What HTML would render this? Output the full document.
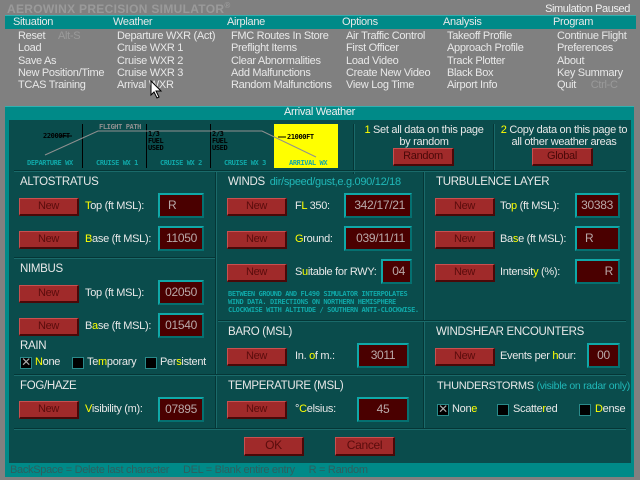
<!DOCTYPE html>
<html><head><meta charset="utf-8"><style>
*{margin:0;padding:0;box-sizing:border-box}
body{width:640px;height:480px;background:#808080;position:relative;overflow:hidden;font-family:"Liberation Sans",sans-serif;font-size:11px;color:#e8e8e8;letter-spacing:-0.3px}
.a{position:absolute;white-space:nowrap}
.y{color:#ffff00}
.c{color:#20b8b8}
.btn{position:absolute;width:60px;height:18px;background:#a02a2a;border-top:1px solid #c85050;border-left:1px solid #c85050;border-right:2px solid #4a0808;border-bottom:2px solid #4a0808;color:#5a0c0c;text-align:center;line-height:15px;font-size:11px}
.in{position:absolute;height:25px;background:#4a0000;border:2px solid #10a8a8;border-right-color:#057070;border-bottom-color:#057070;color:#b8a8a8;line-height:21px;font-size:12px;padding-right:5px;text-align:right}
.hl{position:absolute;height:2px;background:#053636;border-bottom:1px solid #1a6a6a}
.vl{position:absolute;width:2px;background:#053636;border-right:1px solid #1a6a6a}
.h{position:absolute;font-size:11.5px;color:#e8e8e8;white-space:nowrap}
.l{position:absolute;white-space:nowrap;font-size:11px}
.cb{position:absolute;width:12px;height:12px;background:#000;border:1px solid #2a8a8a}
.dl{position:absolute;font-family:"DejaVu Sans Mono",monospace;font-size:7px;font-weight:bold;color:#10a8a8;letter-spacing:-0.4px}
</style></head><body>
<div class="a" style="left:7px;top:1px;font-size:12px;font-weight:bold;color:#9a9a9a;letter-spacing:0.3px">AEROWINX PRECISION SIMULATOR<sup style="font-size:8px">®</sup></div>
<div class="a" style="right:10px;top:3px;font-size:11px;color:#f0f0f0;letter-spacing:-0.4px">Simulation Paused</div>
<div class="a" style="left:5px;top:15px;width:631px;height:14px;background:#008a88;border-top:1px solid #30b0b0"></div>
<div class="a" style="left:13px;top:16px">Situation</div>
<div class="a" style="left:113px;top:16px">Weather</div>
<div class="a" style="left:227px;top:16px">Airplane</div>
<div class="a" style="left:342px;top:16px">Options</div>
<div class="a" style="left:443px;top:16px">Analysis</div>
<div class="a" style="left:553px;top:16px">Program</div>
<div class="a" style="left:18px;top:30px;line-height:12.3px">Reset <span style="color:#9a9a9a;margin-left:10px">Alt-S</span><br>Load<br>Save As<br>New Position/Time<br>TCAS Training</div>
<div class="a" style="left:117px;top:30px;line-height:12.3px">Departure WXR (Act)<br>Cruise WXR 1<br>Cruise WXR 2<br>Cruise WXR 3<br>Arrival WXR</div>
<div class="a" style="left:231px;top:30px;line-height:12.3px">FMC Routes In Store<br>Preflight Items<br>Clear Abnormalities<br>Add Malfunctions<br>Random Malfunctions</div>
<div class="a" style="left:346px;top:30px;line-height:12.3px">Air Traffic Control<br>First Officer<br>Load Video<br>Create New Video<br>View Log Time</div>
<div class="a" style="left:447px;top:30px;line-height:12.3px">Takeoff Profile<br>Approach Profile<br>Track Plotter<br>Black Box<br>Airport Info</div>
<div class="a" style="left:557px;top:30px;line-height:12.3px">Continue Flight<br>Preferences<br>About<br>Key Summary<br>Quit <span style="color:#9a9a9a;margin-left:12px">Ctrl-C</span></div>
<svg class="a" style="left:150px;top:80px" width="14" height="20"><path d="M1 1 L1 15 L4 12 L7 18 L9 17 L6 11 L11 11 Z" fill="#fff" stroke="#000"/></svg>

<div class="a" style="left:5px;top:106px;width:629px;height:371px;background:#008a88;border-top:1px solid #30b0b0"></div>
<div class="a" style="left:5px;top:106px;width:629px;text-align:center;font-size:11px;color:#f0f0f0;line-height:13px">Arrival Weather</div>
<div class="a" style="left:9px;top:120px;width:622px;height:343px;background:#0a4c4c"></div>
<div class="a" style="left:10px;top:464px;font-size:11px;color:#2e5e5e">BackSpace = Delete last character &nbsp; &nbsp; DEL = Blank entire entry &nbsp; &nbsp; R = Random</div>

<div class="a" style="left:274px;top:124px;width:64px;height:44px;background:#ffff00"></div>
<div class="a" style="left:82px;top:124px;width:1px;height:44px;background:#000"></div>
<div class="a" style="left:146px;top:124px;width:1px;height:44px;background:#000"></div>
<div class="a" style="left:210px;top:124px;width:1px;height:44px;background:#000"></div>
<svg class="a" style="left:0;top:0" width="640" height="200"><polyline points="45,155 98,131 262,131 316,157" fill="none" stroke="#909090" stroke-width="1"/><line x1="60" y1="136" x2="72" y2="136" stroke="#000"/><line x1="278" y1="137" x2="286" y2="137" stroke="#000"/></svg>
<div class="dl" style="left:99px;top:123px;color:#909090">FLIGHT PATH</div>
<div class="dl" style="left:43px;top:132px;color:#000">22000FT</div>
<div class="dl" style="left:287px;top:133px;color:#000">21000FT</div>
<div class="dl" style="left:148px;top:131px;color:#000;line-height:7px">1/3<br>FUEL<br>USED</div>
<div class="dl" style="left:212px;top:131px;color:#000;line-height:7px">2/3<br>FUEL<br>USED</div>
<div class="dl" style="left:27px;top:159px">DEPARTURE WX</div>
<div class="dl" style="left:96px;top:159px">CRUISE WX 1</div>
<div class="dl" style="left:160px;top:159px">CRUISE WX 2</div>
<div class="dl" style="left:224px;top:159px">CRUISE WX 3</div>
<div class="dl" style="left:289px;top:159px">ARRIVAL WX</div>
<div class="vl" style="left:353px;top:124px;height:50px"></div>
<div class="vl" style="left:493px;top:124px;height:50px"></div>
<div class="a" style="left:358px;top:124px;width:132px;text-align:center;line-height:12px"><span class="y">1</span> Set all data on this page<br>by random</div>
<div class="a" style="left:496px;top:124px;width:136px;text-align:center;line-height:12px"><span class="y">2</span> Copy data on this page to<br>all other weather areas</div>
<div class="btn" style="left:393px;top:148px;width:61px;color:#4a0808">Random</div>
<div class="btn" style="left:532px;top:148px;width:61px;color:#4a0808">Global</div>

<div class="hl" style="left:14px;top:170px;width:612px"></div>
<div class="vl" style="left:215px;top:172px;height:256px"></div>
<div class="vl" style="left:423px;top:172px;height:256px"></div>
<div class="hl" style="left:14px;top:257px;width:201px"></div>
<div class="hl" style="left:218px;top:320px;width:408px"></div>
<div class="hl" style="left:14px;top:374px;width:612px"></div>
<div class="hl" style="left:14px;top:428px;width:612px"></div>

<div class="h" style="left:20px;top:176px">ALTOSTRATUS</div>
<div class="btn" style="left:19px;top:198px">New</div><div class="l" style="left:85px;top:200px"><span class="y">T</span>op (ft MSL):</div><div class="in" style="left:158px;top:193px;width:46px;text-align:left;padding-left:8px">R</div>
<div class="btn" style="left:19px;top:231px">New</div><div class="l" style="left:85px;top:233px"><span class="y">B</span>ase (ft MSL):</div><div class="in" style="left:158px;top:226px;width:46px">11050</div>
<div class="h" style="left:20px;top:263px">NIMBUS</div>
<div class="btn" style="left:19px;top:285px">New</div><div class="l" style="left:85px;top:287px">Top (ft MSL):</div><div class="in" style="left:158px;top:280px;width:46px">02050</div>
<div class="btn" style="left:19px;top:318px">New</div><div class="l" style="left:85px;top:320px">B<span class="y">a</span>se (ft MSL):</div><div class="in" style="left:158px;top:313px;width:46px">01540</div>
<div class="h" style="left:20px;top:340px">RAIN</div>
<div class="cb" style="left:20px;top:357px;color:#aaa;font-size:12px;line-height:9px;text-align:center">✕</div><div class="l" style="left:35px;top:356px"><span class="y">N</span>one</div>
<div class="cb" style="left:72px;top:357px"></div><div class="l" style="left:87px;top:356px">Te<span class="y">m</span>porary</div>
<div class="cb" style="left:145px;top:357px"></div><div class="l" style="left:160px;top:356px">Per<span class="y">s</span>istent</div>
<div class="h" style="left:20px;top:380px">FOG/HAZE</div>
<div class="btn" style="left:19px;top:401px">New</div><div class="l" style="left:85px;top:403px"><span class="y">V</span>isibility (m):</div><div class="in" style="left:158px;top:397px;width:46px">07895</div>

<div class="h" style="left:228px;top:176px">WINDS <span class="c" style="margin-left:2px;font-size:11px">dir/speed/gust,e.g.090/12/18</span></div>
<div class="btn" style="left:227px;top:198px">New</div><div class="l" style="left:295px;top:200px">F<span class="y">L</span> 350:</div><div class="in" style="left:344px;top:193px;width:68px">342/17/21</div>
<div class="btn" style="left:227px;top:231px">New</div><div class="l" style="left:295px;top:233px"><span class="y">G</span>round:</div><div class="in" style="left:344px;top:226px;width:68px">039/11/11</div>
<div class="btn" style="left:227px;top:264px">New</div><div class="l" style="left:295px;top:266px">S<span class="y">u</span>itable for RWY:</div><div class="in" style="left:381px;top:259px;width:31px">04</div>
<div class="dl" style="left:228px;top:290px;line-height:8px;font-size:7px">BETWEEN GROUND AND FL490 SIMULATOR INTERPOLATES<br>WIND DATA. DIRECTIONS ON NORTHERN HEMISPHERE<br>CLOCKWISE WITH ALTITUDE / SOUTHERN ANTI-CLOCKWISE.</div>
<div class="h" style="left:228px;top:326px">BARO (MSL)</div>
<div class="btn" style="left:227px;top:348px">New</div><div class="l" style="left:295px;top:350px">In. <span class="y">o</span>f m.:</div><div class="in" style="left:357px;top:343px;width:52px;text-align:center;padding:0">3011</div>
<div class="h" style="left:228px;top:380px">TEMPERATURE (MSL)</div>
<div class="btn" style="left:227px;top:401px">New</div><div class="l" style="left:295px;top:403px">°<span class="y">C</span>elsius:</div><div class="in" style="left:357px;top:397px;width:52px;text-align:center;padding:0">45</div>

<div class="h" style="left:436px;top:176px">TURBULENCE LAYER</div>
<div class="btn" style="left:435px;top:198px">New</div><div class="l" style="left:500px;top:200px">To<span class="y">p</span> (ft MSL):</div><div class="in" style="left:575px;top:193px;width:45px">30383</div>
<div class="btn" style="left:435px;top:231px">New</div><div class="l" style="left:500px;top:233px">Ba<span class="y">s</span>e (ft MSL):</div><div class="in" style="left:575px;top:226px;width:45px;text-align:left;padding-left:8px">R</div>
<div class="btn" style="left:435px;top:264px">New</div><div class="l" style="left:500px;top:266px">Intensit<span class="y">y</span> (%):</div><div class="in" style="left:575px;top:259px;width:45px">R</div>
<div class="h" style="left:436px;top:326px">WINDSHEAR ENCOUNTERS</div>
<div class="btn" style="left:435px;top:348px">New</div><div class="l" style="left:500px;top:350px">Events per <span class="y">h</span>our:</div><div class="in" style="left:587px;top:343px;width:33px;text-align:center;padding:0">00</div>
<div class="h" style="left:437px;top:380px;font-size:11px">THUNDERSTORMS <span class="c" style="font-size:10.5px">(visible on radar only)</span></div>
<div class="cb" style="left:437px;top:404px;color:#aaa;font-size:12px;line-height:9px;text-align:center">✕</div><div class="l" style="left:452px;top:403px">Non<span class="y">e</span></div>
<div class="cb" style="left:497px;top:404px"></div><div class="l" style="left:513px;top:403px">Scatte<span class="y">r</span>ed</div>
<div class="cb" style="left:579px;top:404px"></div><div class="l" style="left:595px;top:403px"><span class="y">D</span>ense</div>

<div class="btn" style="left:244px;top:437px;height:19px;font-size:12px">OK</div>
<div class="btn" style="left:335px;top:437px;height:19px;font-size:12px">Cancel</div>
</body></html>
